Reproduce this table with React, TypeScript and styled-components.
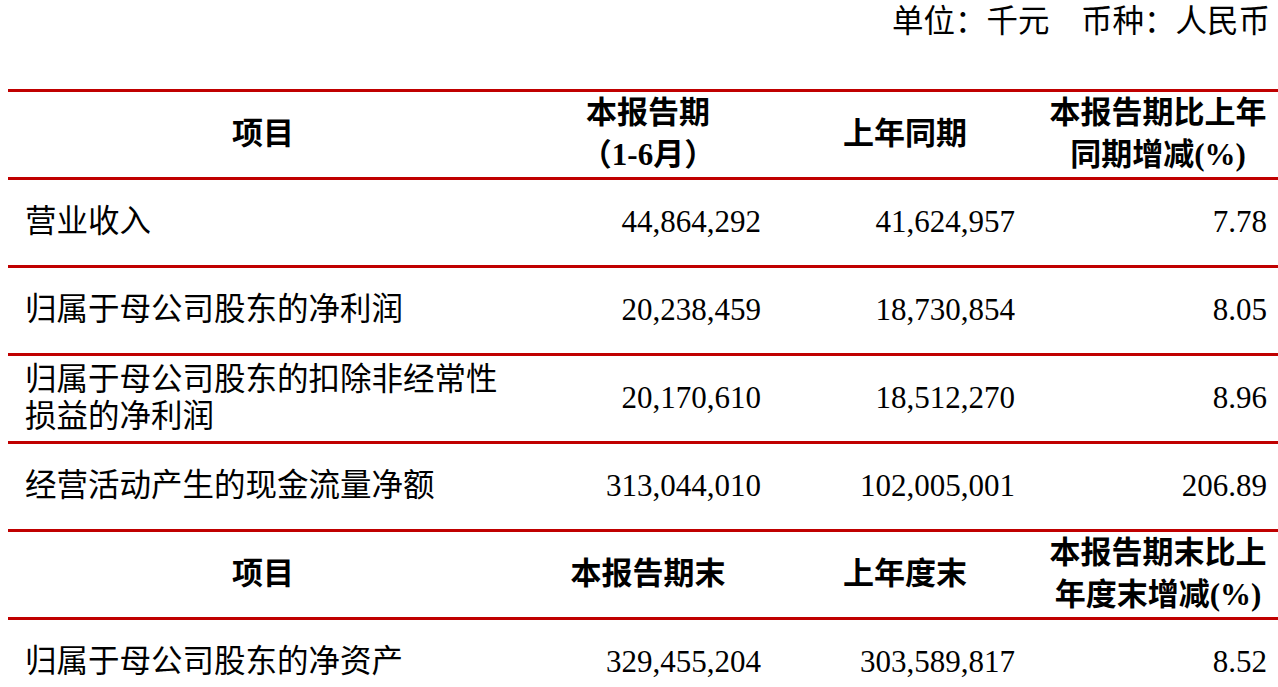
import React from "react";
import styled, { createGlobalStyle } from "styled-components";

const GlobalStyle = createGlobalStyle`
    html, body {
        margin: 0;
        padding: 0;
        background: #ffffff;
        overflow: hidden;
    }
    body {
        font-family: "Liberation Serif", "Noto Sans CJK SC", serif;
        color: #000000;
    }
`;

const RED = "#c00000";

const Page = styled.div`
    padding-left: 8px;
    width: 1276px;
`;

const UnitLine = styled.div`
    width: 1262px;
    height: 44px;
    line-height: 44px;
    text-align: right;
    font-size: 31.5px;
    white-space: pre;
    margin-bottom: 45px;
`;

const Table = styled.div`
    display: flex;
    flex-direction: column;
`;

const Row = styled.div`
    display: grid;
    grid-template-columns: 510px 260px 254px 252px;
    height: 88px;
    box-sizing: border-box;
    border-top: 3px solid ${RED};
`;

const Cell = styled.div<{ $align?: "left" | "center" | "right" }>`
    display: flex;
    align-items: center;
    justify-content: ${({ $align }) =>
        $align === "left" ? "flex-start" : $align === "right" ? "flex-end" : "center"};
    text-align: ${({ $align }) => $align ?? "center"};
    padding: 0 17px 2px;
    font-size: 31.5px;
    line-height: 37px;
    box-sizing: border-box;
`;

const HeadCell = styled.div`
    display: flex;
    align-items: center;
    justify-content: center;
    text-align: center;
    padding-bottom: 2px;
    font-size: 31px;
    font-weight: 700;
    line-height: 42px;
    white-space: nowrap;
    box-sizing: border-box;
`;

const Num = styled.span`
    font-family: "Liberation Serif", serif;
    font-size: 31px;
`;

interface DataRow {
    label: React.ReactNode;
    current: string;
    previous: string;
    change: string;
}

const flowRows: DataRow[] = [
    { label: "营业收入", current: "44,864,292", previous: "41,624,957", change: "7.78" },
    { label: "归属于母公司股东的净利润", current: "20,238,459", previous: "18,730,854", change: "8.05" },
    {
        label: (
            <>
                归属于母公司股东的扣除非经常性
                <br />
                损益的净利润
            </>
        ),
        current: "20,170,610",
        previous: "18,512,270",
        change: "8.96",
    },
    { label: "经营活动产生的现金流量净额", current: "313,044,010", previous: "102,005,001", change: "206.89" },
];

const stockRows: DataRow[] = [
    { label: "归属于母公司股东的净资产", current: "329,455,204", previous: "303,589,817", change: "8.52" },
];

const BodyRow: React.FC<{ row: DataRow }> = ({ row }) => (
    <Row>
        <Cell $align="left">
            <span>{row.label}</span>
        </Cell>
        <Cell $align="right">
            <Num>{row.current}</Num>
        </Cell>
        <Cell $align="right">
            <Num>{row.previous}</Num>
        </Cell>
        <Cell $align="right">
            <Num>{row.change}</Num>
        </Cell>
    </Row>
);

export default function App() {
    return (
        <Page>
            <GlobalStyle />
            <UnitLine>单位：千元　币种：人民币</UnitLine>
            <Table>
                <Row>
                    <HeadCell>项目</HeadCell>
                    <HeadCell>
                        <span>
                            本报告期
                            <br />
                            （<Num>1-6</Num>月）
                        </span>
                    </HeadCell>
                    <HeadCell>上年同期</HeadCell>
                    <HeadCell>
                        <span>
                            本报告期比上年
                            <br />
                            同期增减<Num>(%)</Num>
                        </span>
                    </HeadCell>
                </Row>
                {flowRows.map((row, i) => (
                    <BodyRow key={i} row={row} />
                ))}
                <Row>
                    <HeadCell>项目</HeadCell>
                    <HeadCell>本报告期末</HeadCell>
                    <HeadCell>上年度末</HeadCell>
                    <HeadCell>
                        <span>
                            本报告期末比上
                            <br />
                            年度末增减<Num>(%)</Num>
                        </span>
                    </HeadCell>
                </Row>
                {stockRows.map((row, i) => (
                    <BodyRow key={i} row={row} />
                ))}
            </Table>
        </Page>
    );
}
